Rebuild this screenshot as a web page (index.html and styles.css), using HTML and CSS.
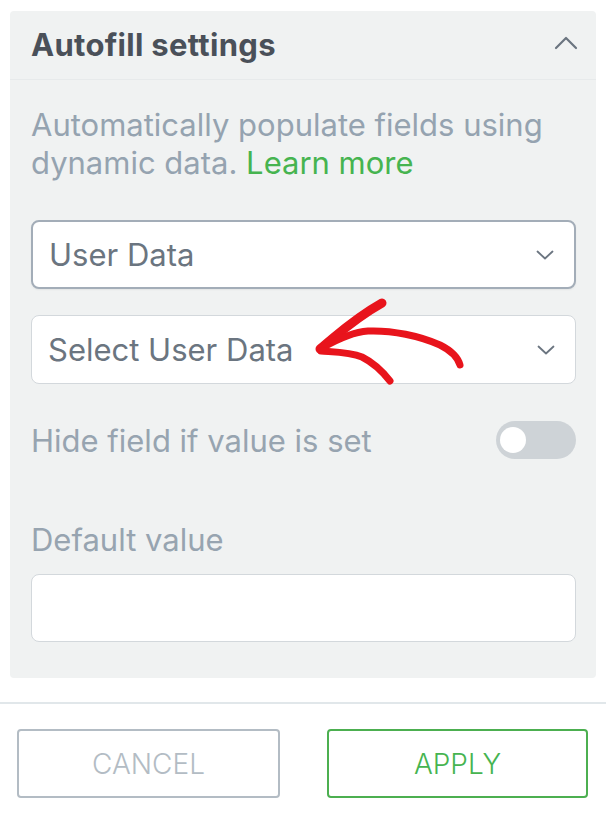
FILE: index.html
```html
<!DOCTYPE html>
<html>
<head>
<meta charset="utf-8">
<link rel="stylesheet" href="styles.css">
</head>
<body>
<div class="page">
  <section class="panel">
    <header class="panel-head">
      <h2 class="title">Autofill settings</h2>
      <svg class="chev-up" width="24" height="14" viewBox="0 0 24 14"><path d="M2 12 L12 2 L22 12" fill="none" stroke="#6b7580" stroke-width="2.2" stroke-linecap="round" stroke-linejoin="round"/></svg>
    </header>
    <div class="panel-body">
      <p class="desc">Automatically populate fields using dynamic data. <a class="link">Learn more</a></p>
      <div class="select active">
        <span>User Data</span>
        <svg class="chev" width="18" height="10" viewBox="0 0 18 10"><path d="M1.5 1.5 L9 8.5 L16.5 1.5" fill="none" stroke="#6b7580" stroke-width="1.8" stroke-linecap="round" stroke-linejoin="round"/></svg>
      </div>
      <div class="select">
        <span>Select User Data</span>
        <svg class="chev" width="18" height="10" viewBox="0 0 18 10"><path d="M1.5 1.5 L9 8.5 L16.5 1.5" fill="none" stroke="#6b7580" stroke-width="1.8" stroke-linecap="round" stroke-linejoin="round"/></svg>
      </div>
      <div class="toggle-row">
        <span class="label">Hide field if value is set</span>
        <span class="toggle"><span class="knob"></span></span>
      </div>
      <div class="label default-label">Default value</div>
      <div class="input"></div>
    </div>
  </section>
  <footer class="footer">
    <button class="btn cancel">CANCEL</button>
    <button class="btn apply">APPLY</button>
  </footer>
  <svg class="arrow" width="606" height="818" viewBox="0 0 606 818">
    <g fill="none" stroke="#e8141c" stroke-linecap="round" stroke-linejoin="round">
      <path d="M382 303 C366 312 345 328 333 338 C326 344 322 347 320 349" stroke-width="9"/>
      <path d="M322 348 C336 340 352 332 368 331 C392 330 420 336 440 345 C452 351 458 358 460 365" stroke-width="7"/>
      <path d="M321 351 C334 352 350 352 362 357 C374 363 383 372 390 381" stroke-width="7"/>
    </g>
  </svg>
</div>
</body>
</html>
```

FILE: styles.css
```css
* { box-sizing: border-box; }
html, body { margin: 0; padding: 0; background: #ffffff; }
body { font-family: Inter, "Noto Sans", sans-serif; }
.page { position: relative; width: 606px; height: 818px; overflow: hidden; }
.panel {
  margin: 11px 10px 0 10px;
  width: 586px;
  height: 667px;
  background: #f0f2f2;
  border-radius: 4px;
}
.panel-head {
  height: 69px;
  display: flex;
  align-items: center;
  justify-content: space-between;
  padding: 0 18px 0 21px;
  border-bottom: 1px solid #e7eaeb;
}
.title {
  margin: 0;
  font-size: 31px;
  line-height: 40px;
  font-weight: 700;
  color: #4a5059;
  letter-spacing: 0.3px;
}
.chev-up { margin-top: -4px; }
.panel-body { padding: 26px 20px 0 21px; }
.desc {
  margin: 0;
  font-size: 31px;
  line-height: 38px;
  color: #95a3b0;
}
.link { color: #46b450; display: inline-block; line-height: 38px; vertical-align: top; }
.select {
  margin-top: 38px;
  height: 69px;
  background: #fff;
  border: 1.5px solid #d3d8dc;
  border-radius: 8px;
  display: flex;
  align-items: center;
  justify-content: space-between;
  padding: 0 20px 0 16px;
  font-size: 31px;
  color: #6b7580;
}
.select.active { border: 2px solid #a3adb8; box-shadow: 0 1px 2px rgba(0,0,0,0.06); }
.select + .select { margin-top: 26px; }
.toggle-row {
  margin-top: 36px;
  height: 40px;
  display: flex;
  align-items: center;
  justify-content: space-between;
}
.label { font-size: 31px; color: #97a4b0; }
.toggle {
  width: 80px;
  height: 38px;
  border-radius: 19px;
  background: #ced3d7;
  display: flex;
  align-items: center;
  padding-left: 4px;
}
.knob { width: 26px; height: 26px; border-radius: 50%; background: #fff; }
.default-label { margin-top: 60px; line-height: 40px; }
.input {
  margin-top: 14px;
  height: 68px;
  background: #fff;
  border: 1.5px solid #d3d8dc;
  border-radius: 8px;
}
.footer {
  margin-top: 24px;
  border-top: 2px solid #e1e7ea;
  display: flex;
  justify-content: space-between;
  padding: 25px 18px 0 17px;
}
.btn {
  width: 263px;
  height: 69px;
  background: #fff;
  border-radius: 4px;
  font-family: Inter, "Noto Sans", sans-serif;
  font-size: 28px;
  font-weight: 300;
}
.cancel { border: 2px solid #b3bcc4; color: #b3bcc4; }
.apply { width: 261px; border: 2px solid #4caf50; color: #46b450; }
.arrow { position: absolute; left: 0; top: 0; pointer-events: none; }
```
